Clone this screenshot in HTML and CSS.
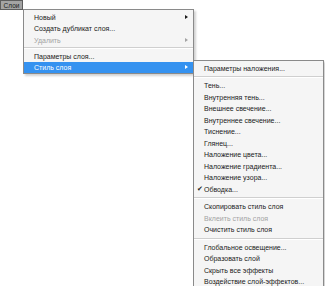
FILE: index.html
```html
<!DOCTYPE html>
<html lang="ru">
<head>
<meta charset="utf-8">
<link rel="stylesheet" href="styles.css">
</head>
<body>
<div class="bar"><span class="btn">Слои</span></div>
<div class="menu main">
  <div class="item"><span>Новый</span><span class="arrow"></span></div>
  <div class="item"><span>Создать дубликат слоя...</span></div>
  <div class="item disabled"><span>Удалить</span><span class="arrow"></span></div>
  <div class="sep"></div>
  <div class="item"><span>Параметры слоя...</span></div>
  <div class="item active"><span>Стиль слоя</span><span class="arrow"></span></div>
</div>
<div class="menu sub">
  <div class="item"><span>Параметры наложения...</span></div>
  <div class="sep"></div>
  <div class="item"><span>Тень...</span></div>
  <div class="item"><span>Внутренняя тень...</span></div>
  <div class="item"><span>Внешнее свечение...</span></div>
  <div class="item"><span>Внутреннее свечение...</span></div>
  <div class="item"><span>Тиснение...</span></div>
  <div class="item"><span>Глянец...</span></div>
  <div class="item"><span>Наложение цвета...</span></div>
  <div class="item"><span>Наложение градиента...</span></div>
  <div class="item"><span>Наложение узора...</span></div>
  <div class="item checked"><span class="check">✔</span><span>Обводка...</span></div>
  <div class="sep"></div>
  <div class="item"><span>Скопировать стиль слоя</span></div>
  <div class="item disabled"><span>Вклеить стиль слоя</span></div>
  <div class="item"><span>Очистить стиль слоя</span></div>
  <div class="sep"></div>
  <div class="item"><span>Глобальное освещение...</span></div>
  <div class="item"><span>Образовать слой</span></div>
  <div class="item"><span>Скрыть все эффекты</span></div>
  <div class="item"><span>Воздействие слой-эффектов...</span></div>
</div>
</body>
</html>
```
FILE: styles.css
```css
html, body {
  margin: 0;
  padding: 0;
  background: #ffffff;
  width: 325px;
  height: 286px;
  overflow: hidden;
  position: relative;
  font-family: "Liberation Sans", Arial, sans-serif;
  font-size: 7px;
  color: #1a1a1a;
}
.bar {
  height: 9px;
  display: flex;
}
.btn {
  display: flex;
  align-items: center;
  justify-content: center;
  box-sizing: border-box;
  width: 23px;
  height: 10px;
  background: #a4a4a4;
  border: 1px solid #5e5e5e;
  font-size: 6.5px;
  color: #202020;
}
.menu {
  position: absolute;
  box-sizing: border-box;
  background: #f5f5f5;
  border: 1px solid #8a8a8a;
  box-shadow: 2px 2px 2px rgba(0, 0, 0, 0.18);
}
.main {
  left: 23px;
  top: 9px;
  width: 171px;
  padding: 1.25px 0 0 0;
}
.sub {
  left: 193px;
  top: 60px;
  width: 131px;
  padding: 1.5px 0 2px 0;
}
.item {
  position: relative;
  height: 11.5px;
  display: flex;
  align-items: center;
  justify-content: space-between;
  padding: 0 5px 0 10px;
  white-space: nowrap;
}
.disabled {
  color: #a3a3a3;
}
.active {
  background: #3592f0;
  color: #ffffff;
}
.main .active {
  height: 11px;
}
.arrow {
  width: 0;
  height: 0;
  border-top: 2.5px solid transparent;
  border-bottom: 2.5px solid transparent;
  border-left: 3px solid #1a1a1a;
}
.disabled .arrow {
  border-left-color: #a3a3a3;
}
.active .arrow {
  border-left-color: #ffffff;
}
.main .sep {
  height: 4.5px;
}
.sub .sep {
  height: 6px;
}
.sep {
  display: flex;
  align-items: center;
}
.sep::before {
  content: "";
  flex: 1;
  height: 0;
  border-top: 1px solid #cfcfcf;
  border-bottom: 1px solid #ffffff;
}
.checked {
  justify-content: flex-start;
}
.check {
  position: absolute;
  left: 3px;
  font-size: 6.5px;
  color: #222;
}
```
